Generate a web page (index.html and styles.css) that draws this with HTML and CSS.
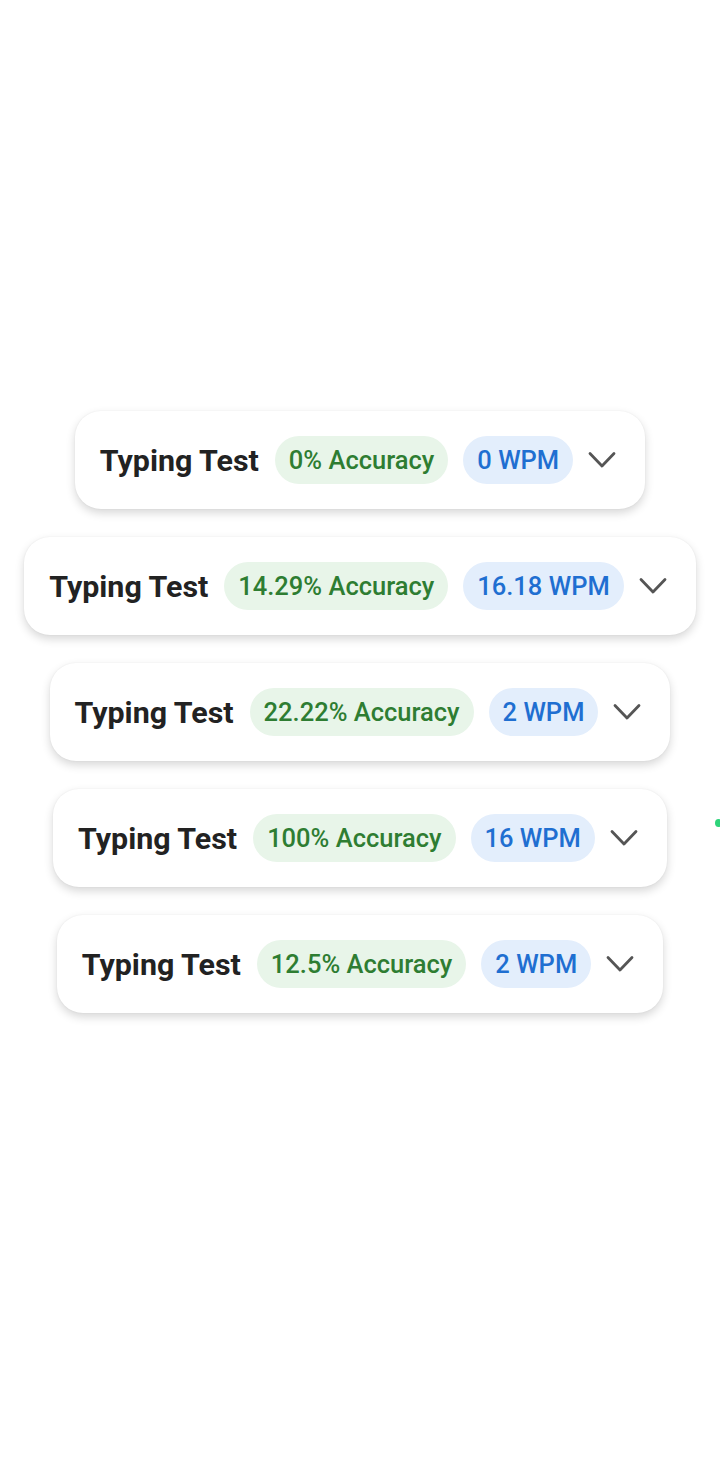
FILE: index.html
```html
<!DOCTYPE html>
<html>
<head>
<meta charset="utf-8">
<link rel="stylesheet" href="styles.css">
</head>
<body>
<div class="list">
  <div class="card">
    <span class="title">Typing Test</span>
    <span class="pill acc">0% Accuracy</span>
    <span class="pill wpm">0 WPM</span>
    <svg class="chev" viewBox="0 0 32 32"><path d="M4 9.5 L16 22 L28 9.5" fill="none" stroke="#555" stroke-width="2.8" stroke-linecap="round" stroke-linejoin="round"/></svg>
  </div>
  <div class="card">
    <span class="title">Typing Test</span>
    <span class="pill acc">14.29% Accuracy</span>
    <span class="pill wpm">16.18 WPM</span>
    <svg class="chev" viewBox="0 0 32 32"><path d="M4 9.5 L16 22 L28 9.5" fill="none" stroke="#555" stroke-width="2.8" stroke-linecap="round" stroke-linejoin="round"/></svg>
  </div>
  <div class="card">
    <span class="title">Typing Test</span>
    <span class="pill acc">22.22% Accuracy</span>
    <span class="pill wpm">2 WPM</span>
    <svg class="chev" viewBox="0 0 32 32"><path d="M4 9.5 L16 22 L28 9.5" fill="none" stroke="#555" stroke-width="2.8" stroke-linecap="round" stroke-linejoin="round"/></svg>
  </div>
  <div class="card">
    <span class="title">Typing Test</span>
    <span class="pill acc">100% Accuracy</span>
    <span class="pill wpm">16 WPM</span>
    <svg class="chev" viewBox="0 0 32 32"><path d="M4 9.5 L16 22 L28 9.5" fill="none" stroke="#555" stroke-width="2.8" stroke-linecap="round" stroke-linejoin="round"/></svg>
  </div>
  <div class="card">
    <span class="title">Typing Test</span>
    <span class="pill acc">12.5% Accuracy</span>
    <span class="pill wpm">2 WPM</span>
    <svg class="chev" viewBox="0 0 32 32"><path d="M4 9.5 L16 22 L28 9.5" fill="none" stroke="#555" stroke-width="2.8" stroke-linecap="round" stroke-linejoin="round"/></svg>
  </div>
</div>
<div class="dot"></div>
</body>
</html>
```

FILE: styles.css
```css
html, body {
  margin: 0;
  padding: 0;
  background: #ffffff;
}
body {
  width: 720px;
  height: 1479px;
  position: relative;
  overflow: hidden;
  font-family: Roboto, "Noto Sans", sans-serif;
}
.list {
  padding-top: 411px;
  display: flex;
  flex-direction: column;
  align-items: center;
  gap: 28px;
}
.card {
  height: 98px;
  box-sizing: border-box;
  display: flex;
  align-items: center;
  padding: 0 27px 0 25px;
  background: #fff;
  border-radius: 26px;
  box-shadow: 0 4px 10px rgba(0,0,0,0.16), 0 0 2px rgba(0,0,0,0.06);
}
.title {
  font-size: 30.4px;
  font-weight: 700;
  color: #222;
  margin-right: 16px;
  white-space: nowrap;
}
.pill {
  height: 48px;
  display: inline-flex;
  align-items: center;
  padding: 0 14px;
  border-radius: 24px;
  font-size: 25.5px;
  font-weight: 500;
  white-space: nowrap;
}
.acc {
  background: #e8f5e9;
  color: #2e7d32;
  margin-right: 15px;
}
.wpm {
  background: #e3eefc;
  color: #1f6fd1;
}
.chev {
  width: 32px;
  height: 32px;
  margin-left: 13px;
}
.dot {
  position: absolute;
  left: 715px;
  top: 819px;
  width: 7px;
  height: 8px;
  border-radius: 50%;
  background: #2ed47a;
}
```
